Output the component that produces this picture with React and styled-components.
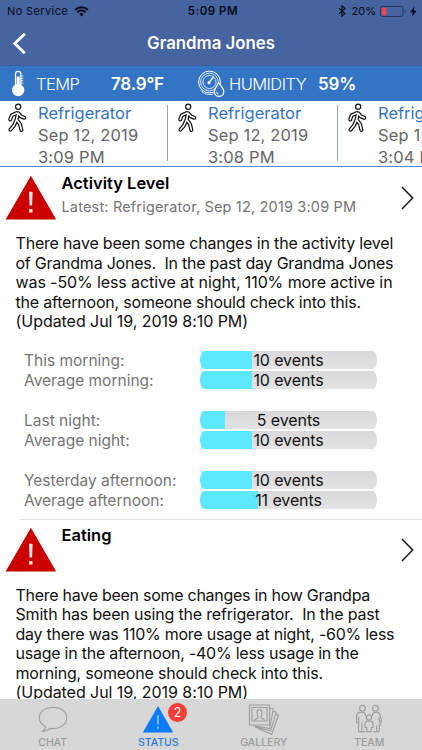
import styled, { createGlobalStyle } from "styled-components";

const events = [
  { place: "Refrigerator", date: "Sep 12, 2019", time: "3:09 PM" },
  { place: "Refrigerator", date: "Sep 12, 2019", time: "3:08 PM" },
  { place: "Refrigerator", date: "Sep 12, 2019", time: "3:04 PM" },
];

const activity = [
  [
    { label: "This morning:", count: 10, fill: 52 },
    { label: "Average morning:", count: 10, fill: 52 },
  ],
  [
    { label: "Last night:", count: 5, fill: 25 },
    { label: "Average night:", count: 10, fill: 52 },
  ],
  [
    { label: "Yesterday afternoon:", count: 10, fill: 52 },
    { label: "Average afternoon:", count: 11, fill: 58 },
  ],
];

const activityText = [
  { text: "There have been some changes in the activity level", tracking: -0.19 },
  { text: "of Grandma Jones.  In the past day Grandma Jones", tracking: -0.23 },
  { text: "was -50% less active at night, 110% more active in", tracking: -0.1 },
  { text: "the afternoon, someone should check into this.", tracking: -0.2 },
  { text: "(Updated Jul 19, 2019 8:10 PM)", tracking: -0.05 },
];

const eatingText = [
  { text: "There have been some changes in how Grandpa", tracking: -0.27 },
  { text: "Smith has been using the refrigerator.  In the past", tracking: -0.18 },
  { text: "day there was 110% more usage at night, -60% less", tracking: -0.25 },
  { text: "usage in the afternoon, -40% less usage in the", tracking: -0.24 },
  { text: "morning, someone should check into this.", tracking: -0.2 },
  { text: "(Updated Jul 19, 2019 8:10 PM)", tracking: -0.05 },
];

function WifiIcon() {
  return (
    <svg width="15" height="11" viewBox="0 0 15 11">
      <path d="M7.5 10.5 5.2 8.1a3.3 3.3 0 0 1 4.6 0Z" fill="#050a16" />
      <path d="M3.3 6.2a6 6 0 0 1 8.4 0M1.1 3.9a9.1 9.1 0 0 1 12.8 0" fill="none" stroke="#050a16" strokeWidth="1.9" />
    </svg>
  );
}

function BluetoothIcon() {
  return (
    <svg width="8" height="12" viewBox="0 0 8 12">
      <path d="m1 3.1 6 5.5-3 2.600V.8l3 2.600-6 5.500" fill="none" stroke="#050a16" strokeWidth="1.1" />
    </svg>
  );
}

function BatteryIcon() {
  return (
    <svg width="26" height="11" viewBox="0 0 26 11">
      <rect x=".5" y=".5" width="22.5" height="10" rx="1.8" fill="none" stroke="#26395f" />
      <rect x="1.7" y="1.7" width="4.6" height="7.6" rx=".6" fill="#f2434b" />
      <path d="M24.5 3.8c1.2.5 1.2 2.9 0 3.4Z" fill="#26395f" />
    </svg>
  );
}

function BoltIcon() {
  return (
    <svg width="7" height="11" viewBox="0 0 7 11">
      <path d="M4.6.3.3 6.2h2.6l-1 4.5 4.7-6H3.7Z" fill="#050a16" />
    </svg>
  );
}

function ThermometerIcon() {
  return (
    <svg width="14" height="27" viewBox="0 0 14 27">
      <path d="M3.5 15V4.100a2.700 2.700 0 0 1 5.400 0V15" fill="none" stroke="#fff" strokeWidth="1.200" />
      <path d="M4.600 6.500h3.200V16H4.600Z" fill="#fff" />
      <circle cx="6.200" cy="20.100" r="6.200" fill="#fff" />
      <path d="M9 6h2.300M9 8.400h2.300M9 10.800h2.300M9 13.200h2.300" stroke="#fff" strokeWidth=".9" />
    </svg>
  );
}

function HumidityIcon() {
  return (
    <svg width="27" height="28" viewBox="0 0 27 28" fill="none" stroke="#fff">
      <circle cx="11.5" cy="12" r="10.900" strokeWidth="1" />
      <circle cx="11.5" cy="12" r="8.900" strokeWidth=".8" />
      <circle cx="11.5" cy="12" r="6.600" strokeWidth=".8" />
      <path d="m11 12.500 4.500-5.500" strokeWidth="1.400" />
      <circle cx="11" cy="12.700" r="1.300" fill="#fff" strokeWidth=".6" />
      <path
        d="M20.800 12.700c1.600 3 5 5.700 5 9a4.700 4.700 0 0 1-9.400 0c0-3.300 2.800-6 4.400-9Z"
        fill="#3474c5"
        strokeWidth="1.200"
      />
      <path d="M18.600 21.600a2.400 2.400 0 0 0 2 2.500" strokeWidth=".8" />
      <path d="M3 20.500c2.800 3.400 7 4.700 12.300 3.700" strokeWidth=".9" />
    </svg>
  );
}

// Black limbs with a thinner white core leave an outlined figure
function WalkerIcon() {
  const body = "M11 10.300 9.300 17.500M9.800 10 4.700 12.400 3.200 16.500M11.300 10.300 13.700 13.300 17.300 14.800M9.100 17.500 7 22.500 3.400 26.700M9.900 17 13 21.300 14.400 27";
  return (
    <svg width="20" height="30" viewBox="0 0 20 30" fill="none" strokeLinecap="round" strokeLinejoin="round">
      <circle cx="11.200" cy="3.700" r="2.600" stroke="#111" strokeWidth="1.200" />
      <path d={body} stroke="#111" strokeWidth="4" />
      <path d={body} stroke="#fff" strokeWidth="1.600" />
    </svg>
  );
}

function WarningIcon() {
  return (
    <svg width="52" height="46" viewBox="0 0 52 46">
      <path d="M25.9.8 51.2 44.6H.6Z" fill="#cb0000" />
      <path d="M24.1 16.7h3.5l-.5 13.8h-2.5ZM24.2 34h3.3v3.6h-3.3Z" fill="#fbe9e9" />
    </svg>
  );
}

function ChevronIcon() {
  return (
    <svg width="13" height="24" viewBox="0 0 13 24">
      <path d="m1 1 10.7 11L1 23" fill="none" stroke="#111" strokeWidth="1.4" />
    </svg>
  );
}

function ChatIcon() {
  return (
    <svg width="30" height="30" viewBox="0 0 30 30" fill="none" stroke="#a3a3a3" strokeWidth="1.2">
      <path d="M4.2 27.200c2.200-1.200 3.300-2.900 3.300-4.700C3.800 20.500 1.300 17.500 1.300 13.900 1.300 7.700 7.300 3.300 15 3.300s13.700 4.400 13.700 10.600S22.800 24.600 15 24.600c-1 0-2-.1-3-.3-1.800 1.800-4.400 3-7.800 2.900Z" />
    </svg>
  );
}

function StatusIcon() {
  return (
    <svg width="32" height="30" viewBox="0 0 32 30">
      <path d="M16 1.900 31.200 28.500H.8Z" fill="#0a7bfa" />
      <path d="M16 11.500v9M16 22.800v2" stroke="#b9d3f5" strokeWidth="1.400" />
    </svg>
  );
}

function GalleryIcon() {
  return (
    <svg width="32" height="32" viewBox="0 0 32 32" fill="none" stroke="#a0a0a0" strokeWidth="1.2">
      <path d="M1.500 1h20v20h-20Z" />
      <path d="M4 3.500h15V17H4Z" />
      <path d="M6.500 17c0-2 1.500-2.500 3.500-3.200v-1.500C8.500 10.500 8.400 5.700 11.500 5.700s3 4.800 1.500 6.600v1.500c2 .7 3.500 1.200 3.500 3.200" />
      <path d="m21.500 4.300 3.800.7-3.600 19.500L5 21.500M25 7l3.300 1.100-5.700 18.700L7 22.800M28 10.300l2.500 1-6.800 18.900-14-5.800" />
    </svg>
  );
}

function TeamIcon() {
  return (
    <svg width="28" height="30" viewBox="0 0 28 30" fill="none" stroke="#a0a0a0" strokeWidth="1.2">
      <circle cx="7.400" cy="4.300" r="2.900" />
      <circle cx="20.500" cy="4.300" r="2.900" />
      <circle cx="14" cy="13.500" r="2.600" />
      <path d="M10.300 12.300c.4-2.600-.7-3.900-2.900-3.900H5.600c-2.600 0-4 1.200-4 3.600v6.200c0 1 2 1 2 0v-5.500V27c0 1.200 3.300 1.200 3.300 0v-8.500V27c0 1 2.800 1.200 3.200.2" />
      <path d="M17.500 12.300c-.3-2.400.7-3.900 3-3.900h1c2.300 0 3.300 1 3.800 3.500l1.300 5.700c.2 1-1.500 1.300-1.900.3l-1-4.400 2 7.500h-1.400V27c0 1.100-2.600 1.100-2.600 0v-5.500 5.500c0 1-2.800 1.100-3.200.2" />
      <path d="M10 23.500v-3.600c0-1.700 1-2.700 2.500-2.700h3c1.500 0 2.500 1 2.500 2.700v3.600h-1.800v4.200h-4.400v-4.200Z" />
    </svg>
  );
}

function App() {
  return (
    <>
      <GlobalStyle />
      <Screen>
        <Header>
          <StatusBar>
            <Carrier>
              No Service <WifiIcon />
            </Carrier>
            <Clock>5:09 PM</Clock>
            <Power>
              <BluetoothIcon />
              <span>20%</span>
              <BatteryIcon />
              <BoltIcon />
            </Power>
          </StatusBar>
          <NavBar>
            <svg width="15" height="24" viewBox="0 0 15 24">
              <path d="M12.800 1.800 2.800 11.500l10 9.700" fill="none" stroke="#fff" strokeWidth="2.900" />
            </svg>
            <NavTitle>Grandma Jones</NavTitle>
          </NavBar>
        </Header>

        <SensorBar>
          <ThermometerIcon />
          <SensorLabel $left={10} $width={75}>TEMP</SensorLabel>
          <SensorValue $width={87}>78.9°F</SensorValue>
          <HumidityIcon />
          <SensorLabel $left={4} $width={89}>HUMIDITY</SensorLabel>
          <SensorValue>59%</SensorValue>
        </SensorBar>

        <EventStrip>
          {events.map((event) => (
            <EventCard key={event.time}>
              <WalkerIcon />
              <EventInfo>
                <Place>{event.place}</Place>
                <When>{event.date}</When>
                <When>{event.time}</When>
              </EventInfo>
            </EventCard>
          ))}
        </EventStrip>

        <List>
          <Alert>
            <AlertHead>
              <WarningIcon />
              <AlertInfo>
                <AlertTitle>Activity Level</AlertTitle>
                <Latest>Latest: Refrigerator, Sep 12, 2019 3:09 PM</Latest>
              </AlertInfo>
              <ChevronIcon />
            </AlertHead>
            <Message>
              {activityText.map((line) => (
                <Line key={line.text} $tracking={line.tracking}>{line.text}</Line>
              ))}
            </Message>
            <Chart>
              {activity.map((group) => (
                <ChartGroup key={group[0].label}>
                  {group.map((row) => (
                    <ChartRow key={row.label}>
                      <RowLabel>{row.label}</RowLabel>
                      <Meter $fill={row.fill}>{row.count} events</Meter>
                    </ChartRow>
                  ))}
                </ChartGroup>
              ))}
            </Chart>
          </Alert>
          <Divider />
          <Alert>
            <AlertHead>
              <WarningIcon />
              <AlertInfo>
                <AlertTitle>Eating</AlertTitle>
              </AlertInfo>
              <ChevronIcon />
            </AlertHead>
            <Message>
              {eatingText.map((line) => (
                <Line key={line.text} $tracking={line.tracking}>{line.text}</Line>
              ))}
            </Message>
          </Alert>
        </List>

        <TabBar>
          <Tab>
            <ChatIcon />
            <TabLabel>CHAT</TabLabel>
          </Tab>
          <Tab $active>
            <StatusIcon />
            <TabLabel>STATUS</TabLabel>
            <Badge>2</Badge>
          </Tab>
          <Tab>
            <GalleryIcon />
            <TabLabel>GALLERY</TabLabel>
          </Tab>
          <Tab>
            <TeamIcon />
            <TabLabel>TEAM</TabLabel>
          </Tab>
        </TabBar>
      </Screen>
    </>
  );
}

const GlobalStyle = createGlobalStyle`
  * {
    box-sizing: border-box;
  }
  body {
    margin: 0;
    overflow: hidden;
    font-family: Inter, "Liberation Sans", sans-serif;
  }
  svg {
    display: block;
    flex: none;
  }
`;

const Screen = styled.div`
  display: flex;
  flex-direction: column;
  width: 422px;
  height: 750px;
  background: #fff;
  white-space: nowrap;
`;

const Header = styled.header`
  flex: none;
  height: 66px;
  background: #46649f;
  border-bottom: 1px solid #3a5fa0;
`;

const StatusBar = styled.div`
  display: grid;
  grid-template-columns: 1fr auto 1fr;
  align-items: center;
  height: 22px;
  padding: 0 5px 0 7px;
  color: #050a16;
  font-size: 11px;
`;

const Carrier = styled.div`
  display: flex;
  align-items: center;
  gap: 6px;
  letter-spacing: 0.38px;
`;

const Clock = styled.div`
  margin-left: 2px;
  font-size: 11.5px;
  font-weight: 600;
  letter-spacing: 0.5px;
`;

const Power = styled.div`
  display: flex;
  align-items: center;
  justify-content: flex-end;
  gap: 4px;

  span {
    margin-left: 2px;
  }
`;

const NavBar = styled.nav`
  display: flex;
  align-items: center;
  height: 43px;
  padding-left: 12px;
`;

const NavTitle = styled.h1`
  flex: 1;
  margin: -1px 27px 0 0;
  color: #fff;
  font-size: 16.8px;
  font-weight: 600;
  text-align: center;
`;

const SensorBar = styled.section`
  display: flex;
  flex: none;
  align-items: center;
  height: 35px;
  padding-left: 12px;
  background: #3474c5;
  color: #fff;
`;

const SensorLabel = styled.span`
  width: ${(props) => props.$width}px;
  margin-left: ${(props) => props.$left}px;
  font-size: 16.5px;
  font-weight: 300;
  letter-spacing: -0.55px;
`;

const SensorValue = styled.span`
  width: ${(props) => (props.$width ? `${props.$width}px` : "auto")};
  font-size: 17px;
  font-weight: 600;
  letter-spacing: -0.2px;
`;

const EventStrip = styled.section`
  display: flex;
  flex: none;
  height: 66px;
  overflow: hidden;
  border-bottom: 1px solid #5b87c8;
`;

const EventCard = styled.article`
  display: flex;
  flex: none;
  align-items: flex-start;
  gap: 11px;
  width: 170px;
  padding: 2px 0 0 7px;
  background: linear-gradient(#8ea4c8, #8ea4c8) 160px 4px / 1px 56px no-repeat;
  background-position: 167px 4px;
`;

const EventInfo = styled.div`
  margin-top: -1px;
  color: #666;
  font-size: 16.5px;
  line-height: 22px;
`;

const Place = styled.div`
  color: #3474c5;
`;

const When = styled.div`
  letter-spacing: 0.15px;
`;

const List = styled.main`
  flex: 1;
  min-height: 0;
  overflow: hidden;
`;

const Alert = styled.article`
  padding-top: 8px;

  & + hr + & {
    padding-top: 7px;
  }
`;

const AlertHead = styled.div`
  display: flex;
  align-items: center;
  height: 46px;
  padding: 0 8px 0 5px;
`;

const AlertInfo = styled.div`
  flex: 1;
  align-self: flex-start;
  margin-left: 4.5px;
`;

const AlertTitle = styled.h2`
  margin: -3px 0 0;
  font-size: 16.5px;
  font-weight: 600;
  line-height: 22px;
`;

const Latest = styled.div`
  margin-top: 3px;
  color: #757575;
  font-size: 14.5px;
  letter-spacing: 0.17px;
  line-height: 20px;
`;

const Message = styled.div`
  margin: 13px 0 0 15.5px;
  color: #111;
  font-size: 16px;
  line-height: 19.5px;
  white-space: pre;
`;

const Line = styled.div`
  letter-spacing: ${(props) => props.$tracking}px;
`;

const Chart = styled.div`
  display: flex;
  flex-direction: column;
  gap: 20px;
  padding: 18.5px 45px 0 24px;
`;

const ChartGroup = styled.div`
  display: flex;
  flex-direction: column;
  height: 40px;
`;

const ChartRow = styled.div`
  display: flex;
  align-items: center;
  justify-content: space-between;
  height: 20.3px;
`;

const RowLabel = styled.span`
  color: #757575;
  font-size: 15.5px;
`;

const Meter = styled.div`
  width: 177px;
  height: 18px;
  border-radius: 4px / 9px;
  background: linear-gradient(#5ce8ff, #5ce8ff) 0 0 / ${(props) => props.$fill}px 100% no-repeat,
    linear-gradient(#d9d9d9, #e3e3e3);
  color: #111;
  font-size: 16px;
  letter-spacing: -0.1px;
  line-height: 18px;
  text-align: center;
`;

const Divider = styled.hr`
  height: 1px;
  margin: 8.5px 0 0 20px;
  border: 0;
  background: #e2e2e2;
`;

const TabBar = styled.footer`
  display: grid;
  flex: none;
  grid-template-columns: repeat(4, 1fr);
  height: 51px;
  background: #d7d7d7;
`;

const Tab = styled.div`
  position: relative;
  display: flex;
  flex-direction: column;
  align-items: center;
  justify-content: space-between;
  padding: 5px 0 0;
  color: ${(props) => (props.$active ? "#267ddc" : "#9b9b9b")};
`;

const TabLabel = styled.span`
  font-size: 10.5px;
  font-weight: 500;
  line-height: 14px;
`;

const Badge = styled.span`
  position: absolute;
  top: 4px;
  left: 62.5px;
  width: 19px;
  height: 19px;
  border-radius: 50%;
  background: #fc3d36;
  color: #fff;
  font-size: 12.5px;
  line-height: 19px;
  text-align: center;
`;

export default App;
